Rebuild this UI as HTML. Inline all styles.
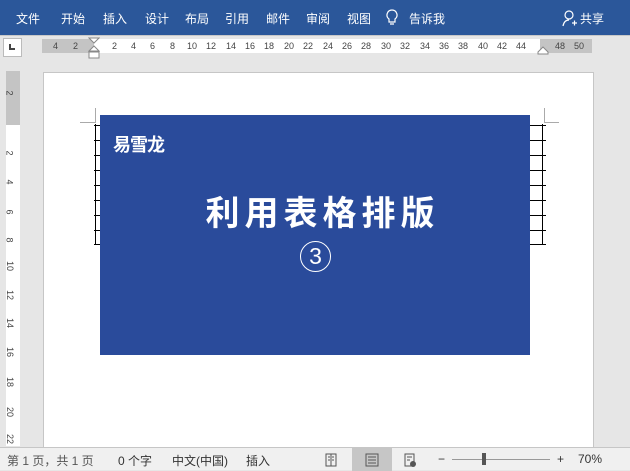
<!DOCTYPE html>
<html><head><meta charset="utf-8"><style>
*{margin:0;padding:0;box-sizing:border-box}
body{width:630px;height:470px;overflow:hidden;background:#e6e6e6;font-family:"Liberation Sans","Noto Sans CJK SC",sans-serif;position:relative}
.a{position:absolute}
.top{left:0;top:0;width:630px;height:35px;background:#2b579a;color:#fff;font-size:12px}
.top span{position:absolute;top:10px}
.rul{font-size:9px;color:#444}
.vr span{position:absolute;left:7px;transform:rotate(90deg);font-size:9px;color:#444}
.sb{left:0;top:447px;width:630px;height:23px;background:#f0f0f0;border-top:1px solid #c6c6c6;font-size:12px;color:#333}
.sb span{position:absolute;top:4px}
</style></head><body>
<div class="a top">
<span style="left:16px">文件</span><span style="left:61px">开始</span><span style="left:103px">插入</span><span style="left:145px">设计</span><span style="left:185px">布局</span><span style="left:225px">引用</span><span style="left:266px">邮件</span><span style="left:306px">审阅</span><span style="left:347px">视图</span>
<svg class="a" style="left:386px;top:9px" width="12" height="18"><path d="M6 1a5 5 0 0 0-3 9v3h6v-3a5 5 0 0 0-3-9zM4 15h4" stroke="#fff" fill="none" stroke-width="1.2"/></svg>
<span style="left:409px">告诉我</span>
<svg class="a" style="left:562px;top:10px" width="16" height="18"><circle cx="7" cy="5" r="4" stroke="#fff" fill="none" stroke-width="1.2"/><path d="M1 16c1-5 4-6 6-6M10 13h5M12.5 10.5v5" stroke="#fff" fill="none" stroke-width="1.2"/></svg>
<span style="left:580px">共享</span>
</div>
<div class="a" style="left:0;top:35px;width:630px;height:1px;background:#c8c8c8"></div>
<div class="a" style="left:3px;top:38px;width:19px;height:19px;background:#fff;border:1px solid #bbb"></div>
<div class="a" style="left:9px;top:44px;width:6px;height:6px;border-left:2px solid #444;border-bottom:2px solid #444"></div>
<div class="a" style="left:42px;top:39px;width:550px;height:14px;background:#fff"></div>
<div class="a" style="left:42px;top:39px;width:52px;height:14px;background:#c4c4c4"></div>
<div class="a" style="left:540px;top:39px;width:52px;height:14px;background:#c4c4c4"></div>
<div class="a rul" style="left:0;top:41px;width:630px;height:12px">
<span class="a" style="left:53px">4</span><span class="a" style="left:73px">2</span>
<span class="a" style="left:112px">2</span><span class="a" style="left:131px">4</span><span class="a" style="left:150px">6</span><span class="a" style="left:170px">8</span><span class="a" style="left:187px">10</span><span class="a" style="left:206px">12</span><span class="a" style="left:226px">14</span><span class="a" style="left:245px">16</span><span class="a" style="left:264px">18</span><span class="a" style="left:284px">20</span><span class="a" style="left:303px">22</span><span class="a" style="left:323px">24</span><span class="a" style="left:342px">26</span><span class="a" style="left:361px">28</span><span class="a" style="left:381px">30</span><span class="a" style="left:400px">32</span><span class="a" style="left:420px">34</span><span class="a" style="left:439px">36</span><span class="a" style="left:458px">38</span><span class="a" style="left:478px">40</span><span class="a" style="left:497px">42</span><span class="a" style="left:516px">44</span><span class="a" style="left:555px">48</span><span class="a" style="left:574px">50</span>
</div>
<svg class="a" style="left:88px;top:37px" width="12" height="25"><path d="M1 1h10L6 6zM6 9l5 5H1zM1 15h10v6H1z" fill="#fff" stroke="#888"/></svg>
<svg class="a" style="left:537px;top:46px" width="12" height="9"><path d="M6 1l5 5v2H1V6z" fill="#fff" stroke="#888"/></svg>
<div class="a" style="left:6px;top:71px;width:14px;height:375px;background:#fff"></div>
<div class="a" style="left:6px;top:71px;width:14px;height:54px;background:#c4c4c4"></div>
<div class="a vr" style="left:0;top:0">
<span style="top:88px">2</span><span style="top:148px">2</span><span style="top:177px">4</span><span style="top:207px">6</span><span style="top:235px">8</span><span style="top:261px;left:5px">10</span><span style="top:290px;left:5px">12</span><span style="top:318px;left:5px">14</span><span style="top:347px;left:5px">16</span><span style="top:377px;left:5px">18</span><span style="top:407px;left:5px">20</span><span style="top:434px;left:5px">22</span>
</div>
<div class="a" style="left:43px;top:72px;width:551px;height:376px;background:#fff;border:1px solid #c6c6c6;border-bottom:none"></div>
<div class="a" style="left:80px;top:122px;width:15px;height:1px;background:#aaa"></div>
<div class="a" style="left:95px;top:108px;width:1px;height:15px;background:#aaa"></div>
<div class="a" style="left:544px;top:122px;width:15px;height:1px;background:#aaa"></div>
<div class="a" style="left:544px;top:108px;width:1px;height:15px;background:#aaa"></div>
<svg class="a" style="left:94px;top:124px" width="452" height="122">
<g stroke="#000" stroke-width="1" fill="none">
<path d="M1.5 0v121M448.5 0v121M0 1.5h452M0 16.5h452M0 31.5h452M0 46.5h452M0 61.5h452M0 76.5h452M0 91.5h452M0 106.5h452M0 120.5h452"/>
</g></svg>
<div class="a" style="left:100px;top:115px;width:430px;height:240px;background:#2a4b9b"></div>
<div class="a" style="left:113px;top:131px;color:#fff;font-size:18px;font-weight:bold;letter-spacing:-1px">易雪龙</div>
<div class="a" style="left:120px;top:194px;width:405px;text-align:center;color:#fff;font-size:34px;font-weight:bold;letter-spacing:5px;line-height:40px">利用表格排版</div>
<div class="a" style="left:300px;top:241px;width:31px;height:31px;border:1.3px solid #fff;border-radius:50%;color:#fff;font-size:23px;text-align:center;line-height:29px">3</div>
<div class="a sb">
<span style="left:7px;color:#555">第 1 页，共 1 页</span><span style="left:118px">0 个字</span><span style="left:172px">中文(中国)</span><span style="left:246px">插入</span>
<div class="a" style="left:352px;top:0;width:40px;height:23px;background:#c6c6c6"></div>
<svg class="a" style="left:325px;top:5px" width="110" height="14"><path d="M1 1h10v12H1zM6 1v12M3 4h2M3 7h2M7 4h2M7 7h2" stroke="#555" fill="none"/><path d="M41 1h12v12H41zM43 4h8M43 7h8M43 10h8" stroke="#555" fill="none"/><path d="M80 1h9v12H80zM82 4h5M82 7h3" stroke="#555" fill="none"/><circle cx="88" cy="11" r="3" fill="#555"/></svg>
<span style="left:438px">−</span>
<div class="a" style="left:452px;top:11px;width:98px;height:1px;background:#999"></div>
<div class="a" style="left:482px;top:5px;width:4px;height:12px;background:#555"></div>
<span style="left:557px">+</span><span style="left:578px">70%</span>
</div>
</body></html>
